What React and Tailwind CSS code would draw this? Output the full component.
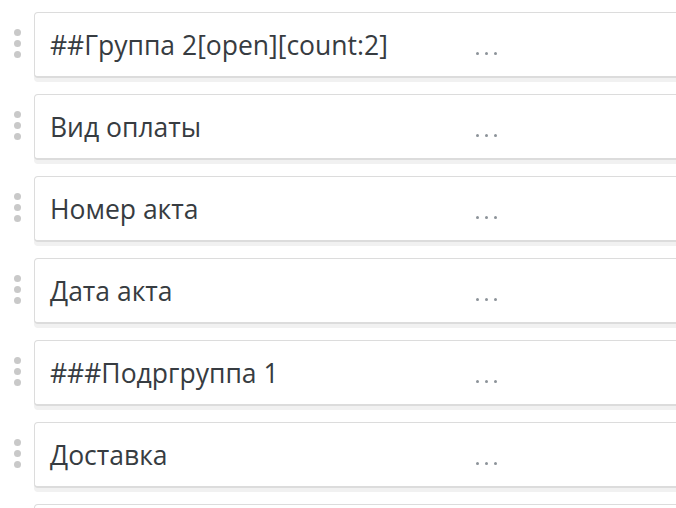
import React from "react";

const rows = [
  "##Группа 2[open][count:2]",
  "Вид оплаты",
  "Номер акта",
  "Дата акта",
  "###Подргруппа 1",
  "Доставка",
  "",
];

function Handle() {
  return (
    <div className="w-[34px] shrink-0 flex flex-col items-center gap-[4px] -mt-[4px]">
      <span className="w-[7px] h-[7px] rounded-full bg-[#c9c9c9]" />
      <span className="w-[7px] h-[7px] rounded-full bg-[#c9c9c9]" />
      <span className="w-[7px] h-[7px] rounded-full bg-[#c9c9c9]" />
    </div>
  );
}

function Row({ label }) {
  return (
    <div className="flex items-center">
      <Handle />
      <div className="w-[680px] h-[66px] shrink-0 flex items-center bg-white border border-[#dcdcdc] border-b-2 rounded-[4px] shadow-[0_4px_0_#f1f1f1]">
        <div className="w-[441px] shrink-0 pl-[15px] pt-[2px] text-[26.5px] leading-none text-[#373c41] whitespace-nowrap">
          {label}
        </div>
        <div className="flex gap-[6px] mt-[18px]">
          <span className="w-[3px] h-[3px] rounded-full bg-[#8c9399]" />
          <span className="w-[3px] h-[3px] rounded-full bg-[#8c9399]" />
          <span className="w-[3px] h-[3px] rounded-full bg-[#8c9399]" />
        </div>
      </div>
    </div>
  );
}

export default function App() {
  return (
    <div
      className="w-[676px] h-[508px] overflow-hidden bg-white pt-[12px] flex flex-col gap-[16px]"
      style={{ fontFamily: '"Open Sans", "Noto Sans", sans-serif' }}
    >
      {rows.map((r, i) => (
        <Row key={i} label={r} />
      ))}
    </div>
  );
}
